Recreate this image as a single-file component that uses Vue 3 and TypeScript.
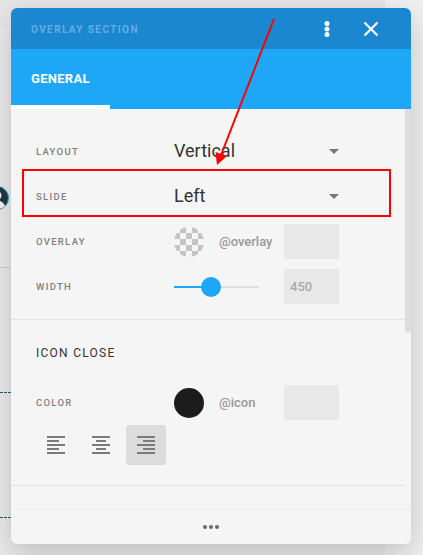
<script setup lang="ts">
interface AlignOption {
  name: string
  lines: { x: number; w: number }[]
  active: boolean
}

const alignOptions: AlignOption[] = [
  {
    name: 'left',
    active: false,
    lines: [
      { x: 0, w: 18 },
      { x: 0, w: 12 },
      { x: 0, w: 18 },
      { x: 0, w: 12 },
      { x: 0, w: 18 },
    ],
  },
  {
    name: 'center',
    active: false,
    lines: [
      { x: 0, w: 18 },
      { x: 4, w: 10 },
      { x: 0, w: 18 },
      { x: 4, w: 10 },
      { x: 0, w: 18 },
    ],
  },
  {
    name: 'right',
    active: true,
    lines: [
      { x: 0, w: 18 },
      { x: 6, w: 12 },
      { x: 0, w: 18 },
      { x: 6, w: 12 },
      { x: 0, w: 18 },
    ],
  },
]
</script>

<template>
  <div class="page">
    <!-- what can be seen of the page behind the dialog -->
    <div class="backdrop">
      <div class="back-panel"></div>
      <div class="back-top"></div>
      <div class="avatar">
        <svg width="24" height="24" viewBox="0 0 24 24">
          <circle cx="12" cy="12" r="11.5" fill="#1f3a40" stroke="#2f9fd8" stroke-width="1" />
          <circle cx="12" cy="9.5" r="4.5" fill="#f5f5f5" />
          <path d="M4 20c1.5-4 5-5.500 8-5.500s6.500 1.500 8 5.500c-2 2-5 3-8 3s-6-1-8-3z" fill="#f5f5f5" />
        </svg>
      </div>
      <div class="back-line"></div>
      <div class="back-dash back-dash-a"></div>
      <div class="back-dash back-dash-b"></div>
    </div>

    <section class="modal">
      <header class="modal-head">
        <span class="modal-title">OVERLAY SECTION</span>
        <svg class="kebab" width="6" height="16" viewBox="0 0 6 16">
          <circle cx="3" cy="2.500" r="2.500" fill="#fff" />
          <circle cx="3" cy="8" r="2.500" fill="#fff" />
          <circle cx="3" cy="13.500" r="2.500" fill="#fff" />
        </svg>
        <svg class="close" width="16" height="16" viewBox="0 0 16 16">
          <path d="M1.500 1.500l13 13M14.500 1.500l-13 13" stroke="#fff" stroke-width="2.200" fill="none" />
        </svg>
      </header>

      <nav class="tabs">
        <div class="tab">GENERAL</div>
      </nav>

      <div class="modal-body">
        <div class="section section-first">
          <div class="row">
            <label class="label">LAYOUT</label>
            <div class="select">
              <span class="select-value">Vertical</span>
              <i class="caret"></i>
            </div>
          </div>
          <div class="row">
            <label class="label">SLIDE</label>
            <div class="select">
              <span class="select-value">Left</span>
              <i class="caret"></i>
            </div>
          </div>
          <div class="row">
            <label class="label">OVERLAY</label>
            <div class="control">
              <span class="swatch swatch-empty"></span>
              <span class="token">@overlay</span>
              <span class="field"></span>
            </div>
          </div>
          <div class="row">
            <label class="label">WIDTH</label>
            <div class="control">
              <div class="slider">
                <span class="slider-fill"></span>
                <span class="slider-thumb"></span>
              </div>
              <span class="field">450</span>
            </div>
          </div>
        </div>

        <div class="section section-second">
          <h3 class="section-title">ICON CLOSE</h3>
          <div class="row">
            <label class="label">COLOR</label>
            <div class="control">
              <span class="swatch swatch-dark"></span>
              <span class="token">@icon</span>
              <span class="field"></span>
            </div>
          </div>
          <div class="aligns">
            <button
              v-for="opt in alignOptions"
              :key="opt.name"
              class="align-btn"
              :class="{ active: opt.active }"
              type="button"
            >
              <svg width="18" height="18" viewBox="0 0 18 18">
                <rect
                  v-for="(line, i) in opt.lines"
                  :key="i"
                  :x="line.x"
                  :y="i * 4"
                  :width="line.w"
                  height="2"
                  fill="#7b7b7b"
                />
              </svg>
            </button>
          </div>
        </div>
        <div class="scroll-thumb"></div>
      </div>

      <footer class="modal-foot">
        <span class="dot"></span>
        <span class="dot"></span>
        <span class="dot"></span>
      </footer>
    </section>

    <!-- red annotations on top of the screenshot -->
    <div class="mark-box"></div>
    <svg class="mark-arrow" width="423" height="555" viewBox="0 0 423 555">
      <line x1="274" y1="19" x2="221" y2="155" stroke="#f00" stroke-width="2" />
      <polygon points="217,165 215.500,152 227,156" fill="#f00" />
    </svg>
  </div>
</template>

<style scoped>
.page {
  position: relative;
  width: 423px;
  height: 555px;
  padding: 8px 0 0 11px;
  box-sizing: border-box;
  overflow: hidden;
  background: #f0f0f0;
  font-family: Roboto, 'Liberation Sans', sans-serif;
}

.backdrop {
  position: absolute;
  inset: 0;
}

.back-panel {
  position: absolute;
  left: 0;
  top: 28px;
  width: 385px;
  height: 527px;
  background: #ebebeb;
}

.back-top {
  position: absolute;
  left: 0;
  top: 0;
  width: 385px;
  height: 28px;
  background: #e6e6e6;
}

.avatar {
  position: absolute;
  left: -15px;
  top: 186px;
  width: 24px;
  height: 24px;
}

.back-line {
  position: absolute;
  left: 0;
  top: 267px;
  width: 11px;
  height: 1px;
  background: #d0d0d0;
}

.back-dash {
  position: absolute;
  left: 0;
  width: 11px;
  border-top: 1px dashed #17626e;
}

.back-dash-a {
  top: 392px;
}

.back-dash-b {
  top: 517px;
}

.modal {
  position: relative;
  display: flex;
  flex-direction: column;
  width: 400px;
  height: 536px;
  border-radius: 6px;
  overflow: hidden;
  background: #f5f5f5;
  box-shadow: 0 10px 30px rgba(0, 0, 0, 0.2);
}

.modal-head {
  display: flex;
  align-items: center;
  height: 41px;
  padding-left: 20px;
  background: #1a87d0;
  flex: none;
}

.modal-title {
  flex: 1;
  margin-top: 2px;
  font-size: 10px;
  font-weight: 700;
  letter-spacing: 1.4px;
  color: #65aee3;
}

.kebab {
  margin-right: 33px;
}

.close {
  margin-right: 32px;
}

.tabs {
  flex: none;
  height: 60px;
  background: #1ea7f6;
}

.tab {
  box-sizing: border-box;
  width: 99px;
  height: 60px;
  padding: 22px 0 0 20px;
  font-size: 13px;
  line-height: 15px;
  font-weight: 700;
  letter-spacing: 0.3px;
  color: #fff;
  border-bottom: 4px solid #fff;
}

.modal-body {
  position: relative;
  flex: 1;
  padding-right: 6px;
}

.section {
  padding-left: 25px;
  padding-right: 66px;
  border-bottom: 1px solid #e2e2e2;
}

.section-first {
  height: 211px;
  box-sizing: border-box;
  padding-top: 25px;
}

.section-second {
  height: 166px;
  box-sizing: border-box;
  padding-top: 26px;
}

.section-title {
  margin: 0 0 25px;
  font-size: 12px;
  line-height: 14px;
  font-weight: 400;
  letter-spacing: 1.26px;
  color: #333;
}

.row {
  display: flex;
  align-items: center;
  height: 35px;
  margin-bottom: 10px;
}

.label {
  width: 138px;
  flex: none;
  font-size: 9.500px;
  font-weight: 500;
  letter-spacing: 1.3px;
  color: #808080;
}

.select {
  flex: 1;
  display: flex;
  align-items: center;
  justify-content: space-between;
  font-size: 18px;
  color: #333;
}

.select-value {
  margin-top: -2px;
}

.caret {
  width: 0;
  height: 0;
  border-left: 5px solid transparent;
  border-right: 5px solid transparent;
  border-top: 5px solid #777;
}

.control {
  flex: 1;
  display: flex;
  align-items: center;
}

.swatch {
  width: 30px;
  height: 30px;
  border-radius: 50%;
  flex: none;
}

.swatch-empty {
  background: repeating-conic-gradient(#c4c4c4 0 25%, #f5f5f5 0 50%) 0 0 / 12px 12px;
}

.swatch-dark {
  background: #1c1c1c;
}

.token {
  flex: 1;
  margin-left: 15px;
  font-size: 13px;
  font-weight: 500;
  color: #999;
}

.field {
  box-sizing: border-box;
  width: 55px;
  height: 35px;
  flex: none;
  padding-left: 6px;
  font-size: 13px;
  line-height: 35px;
  font-weight: 500;
  color: #aaa;
  background: #e8e8e8;
}

.slider {
  position: relative;
  width: 85px;
  height: 2px;
  margin-right: 25px;
  background: #dedede;
}

.slider-fill {
  position: absolute;
  left: 0;
  top: 0;
  width: 37px;
  height: 2px;
  background: #1ea7f6;
}

.slider-thumb {
  position: absolute;
  left: 27px;
  top: -9px;
  width: 20px;
  height: 20px;
  border-radius: 50%;
  background: #1ea7f6;
}

.aligns {
  display: flex;
  gap: 5px;
  margin-top: -5px;
}

.align-btn {
  display: flex;
  align-items: center;
  justify-content: center;
  width: 40px;
  height: 40px;
  padding: 0;
  border: none;
  border-radius: 3px;
  background: none;
}

.align-btn.active {
  background: #dcdcdc;
}

.scroll-thumb {
  position: absolute;
  right: 0;
  top: 0;
  width: 6px;
  height: 224px;
  border-radius: 0 0 3px 3px;
  background: #ddd;
}

.modal-foot {
  flex: none;
  display: flex;
  align-items: center;
  justify-content: center;
  gap: 2px;
  height: 35px;
  border-top: 1px solid #ececec;
  box-sizing: border-box;
}

.dot {
  width: 4px;
  height: 4px;
  border-radius: 50%;
  background: #6b6b6b;
}

.mark-box {
  position: absolute;
  left: 22px;
  top: 169px;
  width: 369px;
  height: 48px;
  box-sizing: border-box;
  border: 2px solid #f00;
}

.mark-arrow {
  position: absolute;
  left: 0;
  top: 0;
  pointer-events: none;
}
</style>
